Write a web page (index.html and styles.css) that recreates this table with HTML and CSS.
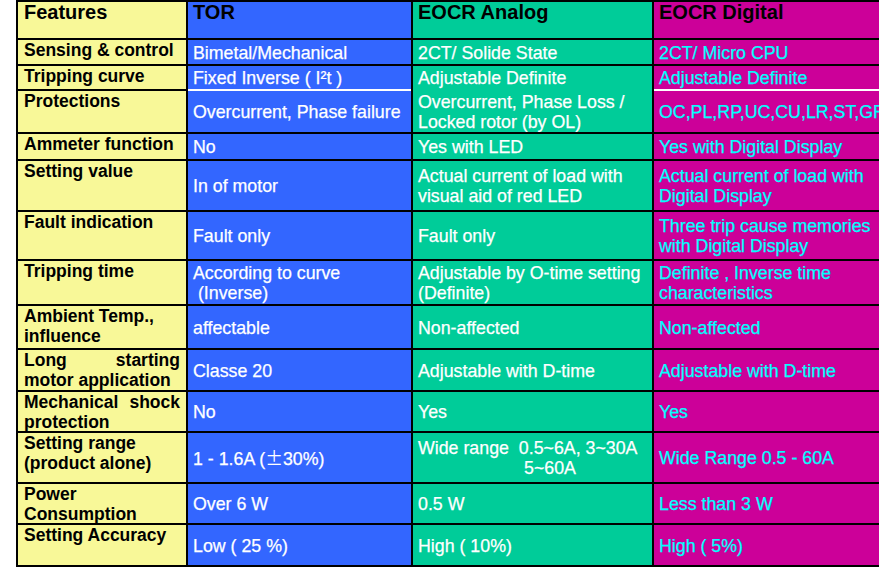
FILE: index.html
```html
<!DOCTYPE html>
<html lang="en">
<head>
<meta charset="utf-8">
<title>TOR vs EOCR</title>
<link rel="stylesheet" href="styles.css">
</head>
<body>
<div class="sheet">
  <div class="cell head feat">Features</div>
  <div class="cell head tor">TOR</div>
  <div class="cell head ana">EOCR Analog</div>
  <div class="cell head dig">EOCR Digital</div>

  <div class="cell feat">Sensing &amp; control</div>
  <div class="cell data tor"><p class="txt">Bimetal/Mechanical</p></div>
  <div class="cell data ana"><p class="txt">2CT/ Solide State</p></div>
  <div class="cell data dig"><p class="txt">2CT/ Micro CPU</p></div>

  <div class="cell feat">Tripping curve</div>
  <div class="cell data tor"><p class="txt">Fixed Inverse ( I²t )</p></div>
  <div class="cell data ana"><p class="txt">Adjustable Definite</p></div>
  <div class="cell data dig"><p class="txt">Adjustable Definite</p></div>

  <div class="cell feat">Protections</div>
  <div class="cell data tor white-top"><p class="txt">Overcurrent, Phase failure</p></div>
  <div class="cell data ana green-top"><p class="txt">Overcurrent, Phase Loss /<br>Locked rotor (by OL)</p></div>
  <div class="cell data dig white-top"><p class="txt">OC,PL,RP,UC,CU,LR,ST,GF</p></div>

  <div class="cell feat">Ammeter function</div>
  <div class="cell data tor"><p class="txt">No</p></div>
  <div class="cell data ana"><p class="txt">Yes with LED</p></div>
  <div class="cell data dig"><p class="txt">Yes with Digital Display</p></div>

  <div class="cell feat">Setting value</div>
  <div class="cell data tor"><p class="txt">In of motor</p></div>
  <div class="cell data ana"><p class="txt">Actual current of load with<br>visual aid of red LED</p></div>
  <div class="cell data dig"><p class="txt">Actual current of load with<br>Digital Display</p></div>

  <div class="cell feat">Fault indication</div>
  <div class="cell data tor"><p class="txt">Fault only</p></div>
  <div class="cell data ana"><p class="txt">Fault only</p></div>
  <div class="cell data dig"><p class="txt">Three trip cause memories<br>with Digital Display</p></div>

  <div class="cell feat">Tripping time</div>
  <div class="cell data tor"><p class="txt">According to curve<br>&nbsp;(Inverse)</p></div>
  <div class="cell data ana"><p class="txt">Adjustable by O-time setting<br>(Definite)</p></div>
  <div class="cell data dig"><p class="txt">Definite , Inverse time<br>characteristics</p></div>

  <div class="cell feat">Ambient Temp.,<br>influence</div>
  <div class="cell data tor"><p class="txt">affectable</p></div>
  <div class="cell data ana"><p class="txt">Non-affected</p></div>
  <div class="cell data dig"><p class="txt">Non-affected</p></div>

  <div class="cell feat">Long starting motor application</div>
  <div class="cell data tor"><p class="txt">Classe 20</p></div>
  <div class="cell data ana"><p class="txt">Adjustable with D-time</p></div>
  <div class="cell data dig"><p class="txt">Adjustable with D-time</p></div>

  <div class="cell feat">Mechanical shock protection</div>
  <div class="cell data tor"><p class="txt">No</p></div>
  <div class="cell data ana"><p class="txt">Yes</p></div>
  <div class="cell data dig"><p class="txt">Yes</p></div>

  <div class="cell feat">Setting range<br>(product alone)</div>
  <div class="cell data tor"><p class="txt">1 - 1.6A (<span class="pm">±</span>30%)</p></div>
  <div class="cell data ana"><p class="txt">Wide range&nbsp; 0.5~6A, 3~30A<br><span class="indent">5~60A</span></p></div>
  <div class="cell data dig"><p class="txt">Wide Range 0.5 - 60A</p></div>

  <div class="cell feat">Power<br>Consumption</div>
  <div class="cell data tor"><p class="txt">Over 6 W</p></div>
  <div class="cell data ana"><p class="txt">0.5 W</p></div>
  <div class="cell data dig"><p class="txt">Less than 3 W</p></div>

  <div class="cell feat">Setting Accuracy</div>
  <div class="cell data tor"><p class="txt">Low ( 25 %)</p></div>
  <div class="cell data ana"><p class="txt">High ( 10%)</p></div>
  <div class="cell data dig"><p class="txt">High ( 5%)</p></div>
</div>
</body>
</html>
```

FILE: styles.css
```css
html, body {
  margin: 0;
  padding: 0;
  background: #ffffff;
  overflow: hidden;
}

body {
  width: 879px;
  height: 581px;
  font-family: "Liberation Sans", Arial, sans-serif;
}

.sheet {
  margin-left: 16px;
  width: max-content;
  display: grid;
  grid-template-columns: 168px 223px 239px 260px;
  grid-template-rows: 36px 24px 23px 41px 25px 49px 47px 43px 42px 40px 39px 49px 39px 40px;
  gap: 2px;
  padding: 2px;
  background: #000000;
}

.cell {
  line-height: 20px;
  white-space: nowrap;
  overflow: hidden;
}

.feat {
  background: #f8f898;
  color: #000000;
  font-weight: bold;
  font-size: 17.5px;
  padding: 0 6px;
  text-align: justify;
  white-space: normal;
}

.tor {
  background: #3366ff;
}

.ana {
  background: #00cc99;
}

.dig {
  background: #cc0099;
}

.head {
  color: #000000;
  font-weight: bold;
  font-size: 20px;
  padding: 0 5px;
  text-align: left;
}

.head.feat {
  font-size: 20px;
  padding-left: 6px;
}

.data {
  display: flex;
  flex-direction: column;
  justify-content: center;
  padding: 1px 5px 0;
  font-size: 17.8px;
  color: #ffffff;
  -webkit-text-stroke: 0.25px currentColor;
}

.data.dig {
  color: #00ffff;
}

.txt {
  margin: 0;
  white-space: nowrap;
}

.white-top {
  box-shadow: 0 -2px 0 #ffffff;
}

.green-top {
  box-shadow: 0 -2px 0 #00cc99;
}

.indent {
  padding-left: 106px;
}

.pm {
  font-family: "Noto Sans CJK SC", sans-serif;
  font-weight: normal;
  -webkit-text-stroke: 0;
}
```
